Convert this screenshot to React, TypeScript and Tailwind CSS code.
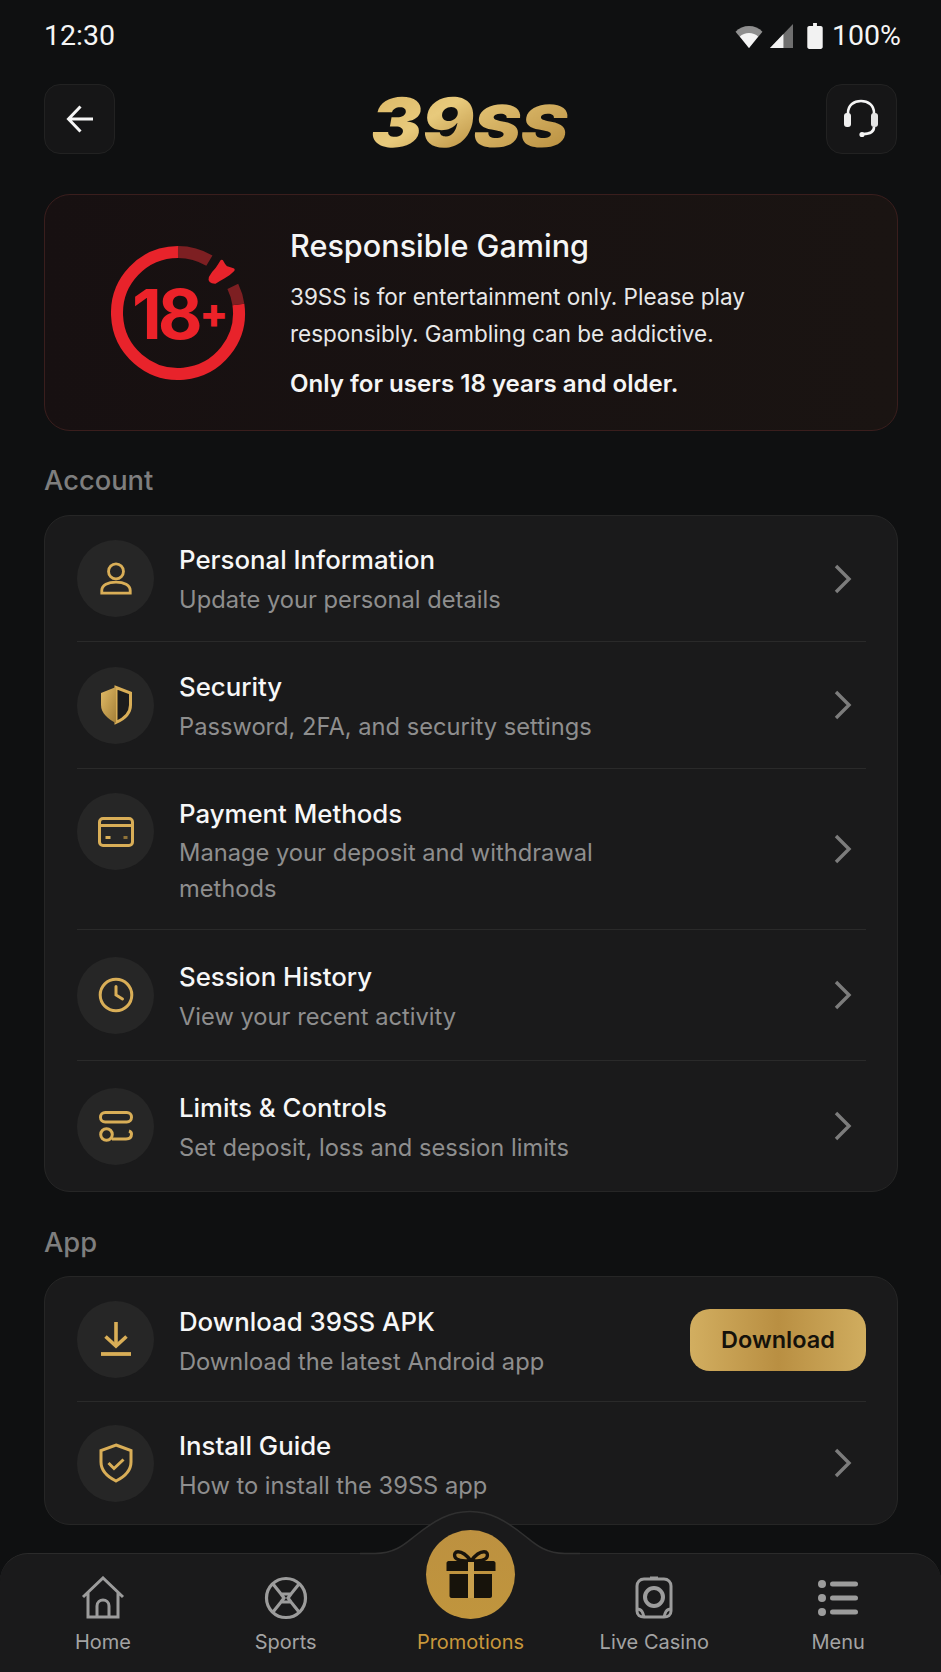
import React from "react";

const GOLD = "#d9ae57";

function Chevron() {
  return (
    <svg width="20" height="30" viewBox="0 0 20 30" fill="none" className="mr-[13px] shrink-0">
      <path d="M3 2 L16 15 L3 28" stroke="#7c7c7c" strokeWidth="3.4" />
    </svg>
  );
}

const UserIcon = () => (
  <svg width="32" height="33" viewBox="0 0 36 37" fill="none" stroke={GOLD} strokeWidth="3.2">
    <circle cx="18" cy="10.5" r="8.4" />
    <path d="M2 35 V32 C2 26 9 22.5 18 22.5 C27 22.5 34 26 34 32 V35 Z" />
  </svg>
);
const ShieldHalfIcon = () => (
  <svg width="36" height="40" viewBox="0 0 36 40">
    <defs>
      <linearGradient id="sh" x1="0" x2="1" y1="0" y2="1">
        <stop offset="0" stopColor="#e2bb66" />
        <stop offset="1" stopColor="#a37f38" />
      </linearGradient>
    </defs>
    <path d="M18 2.5 L32.5 8 V20 C32.5 28 26 34 18 37.5 Z" fill="#1c1c1c" stroke={GOLD} strokeWidth="3" />
    <path d="M18 2 L3 8 V20 C3 28 10 34 18 38 Z" fill="url(#sh)" />
  </svg>
);
const CardIcon = () => (
  <svg width="36" height="30" viewBox="0 0 36 30" fill="none" stroke={GOLD} strokeWidth="3">
    <rect x="1.5" y="1.5" width="33" height="27" rx="3.5" />
    <path d="M1.5 8.5 H34.5" />
    <path d="M7.5 20.5 H12.5" />
    <path d="M25.5 20.5 H29.5" stroke="#8f7238" />
  </svg>
);
const ClockIcon = () => (
  <svg width="36" height="36" viewBox="0 0 36 36" fill="none" stroke={GOLD} strokeWidth="3">
    <circle cx="18" cy="18" r="15.8" />
    <path d="M18 9.5 V18 L24.5 22" strokeLinecap="round" />
  </svg>
);
const LimitsIcon = () => (
  <svg width="34" height="31" viewBox="0 0 34 31" fill="none" stroke={GOLD} strokeWidth="3">
    <rect x="1.5" y="1.5" width="31" height="9.5" rx="4.7" />
    <circle cx="7.5" cy="23.5" r="5.8" />
    <path d="M13 28 H27 C30.5 28 32.5 26 32.5 23 C32.5 21.5 31.5 20.5 30 20" />
  </svg>
);
const DownloadIcon = () => (
  <svg width="36" height="36" viewBox="0 0 36 36" fill="none" stroke={GOLD}>
    <path d="M18 1 V24" strokeWidth="3.6" />
    <path d="M7.5 15.5 L18 25 L28.5 15.5" strokeWidth="3.6" />
    <path d="M3 33 H33" strokeWidth="3.8" />
  </svg>
);
const ShieldCheckIcon = () => (
  <svg width="36" height="40" viewBox="0 0 36 40" fill="none" stroke={GOLD} strokeWidth="3">
    <path d="M18 2 L33 7.5 V19 C33 28 26 34 18 38 C10 34 3 28 3 19 V7.5 Z" />
    <path d="M10.5 20 L16 25.5 L25.5 16.5" />
  </svg>
);

function Circle({ children }: { children: React.ReactNode }) {
  return (
    <div className="flex h-[77px] w-[77px] shrink-0 items-center justify-center rounded-full bg-[#262626]">{children}</div>
  );
}

function Row({
  icon,
  title,
  sub,
  h,
  right,
  top,
  textOffset = "mt-[3px]",
}: {
  icon: React.ReactNode;
  title: string;
  sub: React.ReactNode;
  h: string;
  right?: React.ReactNode;
  top?: boolean;
  textOffset?: string;
}) {
  return (
    <div className={`flex ${h} ${top ? "items-start pt-6" : "items-center"}`}>
      <Circle>{icon}</Circle>
      <div className={`ml-[25px] min-w-0 flex-1 ${textOffset}`}>
        <div className="text-[25.8px] font-medium leading-9 text-[#f7f7f7]">{title}</div>
        <div className={`${top ? "mt-[3px]" : "mt-1"} text-[23.7px] leading-9 text-[#8e8e8e]`}>{sub}</div>
      </div>
      <div className={top ? "-mt-6 self-center" : ""}>{right ?? <Chevron />}</div>
    </div>
  );
}

const Divider = () => <div className="h-px bg-[#2a2a2a]" />;

function SectionLabel({ children, className }: { children: React.ReactNode; className: string }) {
  return <div className={`text-[27.3px] font-medium leading-8 text-[#7e7e7e] ${className}`}>{children}</div>;
}

function NavItem({
  label,
  icon,
  active,
  className = "",
}: {
  label: string;
  icon: React.ReactNode;
  active?: boolean;
  className?: string;
}) {
  return (
    <div className={`flex flex-col items-center ${className}`}>
      <div className="flex h-[44px] items-center justify-center">{icon}</div>
      <div className={`mt-[8px] text-[20px] leading-7 ${active ? "text-[#c8973b]" : "text-[#a3a3a3]"}`}>{label}</div>
    </div>
  );
}

export default function App() {
  return (
    <div className="relative flex h-[1672px] w-[941px] flex-col overflow-hidden bg-[#0f1011] font-['Inter',sans-serif] text-white">
      {/* status bar */}
      <div className="flex h-[84px] items-start justify-between pl-[44px] pr-[40px] pt-[18px] font-['Roboto',sans-serif] text-[#f5f5f5]">
        <span className="text-[28.5px] leading-9">12:30</span>
        <div className="flex items-center">
          <svg width="30" height="25" viewBox="0 0 30 26">
            <path d="M15 25 L1 8 C8 0 22 0 29 8 Z" fill="#8f8f8f" />
            <path d="M15 25 L5.5 13 C10 8 20 8 24.5 13 Z" fill="#f5f5f5" />
          </svg>
          <svg width="23" height="25" viewBox="0 0 24 26" className="ml-[6px]">
            <path d="M24 0 V25 H0 Z" fill="#6f6f6f" />
            <path d="M14 10.5 V25 H0 Z" fill="#f2f2f2" />
          </svg>
          <svg width="16" height="26" viewBox="0 0 16 27" className="ml-[14px]">
            <path d="M6 0 H10 V3 H14 C15 3 16 4 16 5 V25 C16 26 15 27 14 27 H2 C1 27 0 26 0 25 V5 C0 4 1 3 2 3 H6 Z" fill="#f2f2f2" />
          </svg>
          <span className="ml-[9px] text-[28.5px] leading-9">100%</span>
        </div>
      </div>

      {/* header */}
      <div className="flex h-[70px] items-center justify-between px-[44px]">
        <div className="flex h-[70px] w-[71px] items-center justify-center rounded-[16px] border border-[#222] bg-[#161617]">
          <svg width="28" height="28" viewBox="0 0 28 28" fill="none" stroke="#f5f5f5" strokeWidth="3">
            <path d="M27 14 H2.5 M14.5 1.5 L2.5 14 L14.5 26.5" />
          </svg>
        </div>
        <div className="mt-[6px] flex -skew-x-[10deg] items-baseline font-['Inter',sans-serif] font-black leading-none">
          <span className="mr-[12px] origin-left scale-x-[1.13] bg-gradient-to-br from-[#dcb866] via-[#e8ca7c] to-[#b98f3f] bg-clip-text text-[68px] text-transparent">39</span>
          <span className="mr-[16px] origin-left scale-x-[1.22] bg-gradient-to-br from-[#e6c677] to-[#b88e3e] bg-clip-text text-[58px] text-transparent">SS</span>
        </div>
        <div className="flex h-[70px] w-[71px] items-center justify-center rounded-[16px] border border-[#222] bg-[#161617]">
          <svg width="38" height="40" viewBox="0 0 38 40" fill="none">
            <path d="M6 20 V14 C6 6 12 2 19 2 C26 2 32 6 32 14 V20" stroke="#f5f5f5" strokeWidth="2.6" />
            <rect x="2" y="14" width="7" height="14" rx="3" fill="#f0f0f0" />
            <rect x="29" y="14" width="7" height="14" rx="3" fill="#e4e4e4" />
            <path d="M32 28 C32 33 27 35 21 35" stroke="#f5f5f5" strokeWidth="2.6" />
            <circle cx="20" cy="35.5" r="2.6" fill="#f5f5f5" />
          </svg>
        </div>
      </div>

      {/* responsible gaming banner */}
      <div className="ml-[44px] mt-[40px] flex h-[237px] w-[854px] items-center rounded-[26px] border border-[#3a1e1d] bg-gradient-to-r from-[#171011] to-[#1a1412] pl-[66px]">
        <svg width="136" height="140" viewBox="0 0 136 140" className="shrink-0">
          <path d="M67 9 A61 61 0 1 0 127.4 61.5" fill="none" stroke="#e8232b" strokeWidth="12" />
          <path d="M67 9 A61 61 0 0 1 98.4 17.7" fill="none" stroke="#7d1f22" strokeWidth="12" />
          <path d="M121.8 43.3 A61 61 0 0 1 127.4 61.5" fill="none" stroke="#7d1f22" strokeWidth="12" />
          <path d="M110.7 18.5 Q113 23 115 24.5 L122 26.8 Q118 31 113.3 33.5 Q108 36.5 104 39 Q98 39 99.5 34.5 Q102 30 106 26 Q108 23 110.7 18.5 Z" fill="#e8232b" stroke="#e8232b" strokeWidth="3.4" strokeLinejoin="round" />
          <text x="21" y="96" fill="#ec2229" fontFamily="Inter, sans-serif" fontSize="69" fontWeight="700" letterSpacing="-4">18</text>
          <text x="103" y="85" textAnchor="middle" fill="#ec2229" fontFamily="Inter, sans-serif" fontSize="42" fontWeight="800">+</text>
        </svg>
        <div className="ml-[43px] pt-[1px]">
          <div className="text-[30.6px] font-medium leading-10 text-[#f5f5f5]">Responsible Gaming</div>
          <div className="mt-[12px] text-[22.5px] leading-[37px] text-[#e8e8e8]">
            39SS is for entertainment only. Please play
            <br />
            responsibly. Gambling can be addictive.
          </div>
          <div className="mt-[16px] text-[24.1px] font-semibold leading-8 text-[#f5f5f5]">Only for users 18 years and older.</div>
        </div>
      </div>

      <SectionLabel className="mx-[44px] mt-[34px]">Account</SectionLabel>

      <div className="ml-[44px] mt-[18px] w-[854px] rounded-[26px] border border-[#262626] bg-[#1a1a1b] pl-[32px] pr-[31px]">
        <Row h="h-[125px]" icon={<UserIcon />} title="Personal Information" sub="Update your personal details" />
        <Divider />
        <Row h="h-[126px]" icon={<ShieldHalfIcon />} title="Security" sub="Password, 2FA, and security settings" />
        <Divider />
        <Row
          h="h-[160px]"
          top
          icon={<CardIcon />}
          title="Payment Methods"
          sub={
            <>
              Manage your deposit and withdrawal
              <br />
              methods
            </>
          }
        />
        <Divider />
        <Row h="h-[130px]" icon={<ClockIcon />} title="Session History" sub="View your recent activity" />
        <Divider />
        <Row h="h-[130px]" icon={<LimitsIcon />} title="Limits & Controls" sub="Set deposit, loss and session limits" />
      </div>

      <SectionLabel className="mx-[44px] mt-[35px]">App</SectionLabel>

      <div className="ml-[44px] mt-[17px] w-[854px] rounded-[26px] border border-[#262626] bg-[#1a1a1b] pl-[32px] pr-[31px]">
        <Row
          h="h-[124px]"
          textOffset="mt-[5px]"
          icon={<DownloadIcon />}
          title="Download 39SS APK"
          sub="Download the latest Android app"
          right={
            <div className="mt-[1px] flex h-[62px] w-[176px] items-center justify-center rounded-[20px] bg-gradient-to-r from-[#d2ae60] via-[#b98f42] to-[#d0ad5f] text-[23.5px] font-semibold text-[#15120b]">
              Download
            </div>
          }
        />
        <Divider />
        <Row h="h-[122px]" textOffset="mt-[5px]" icon={<ShieldCheckIcon />} title="Install Guide" sub="How to install the 39SS app" />
      </div>

      {/* bottom nav */}
      <div className="relative mt-auto h-[119px] rounded-t-[28px] border-t border-[#2b2b2b] bg-[#1a1a1b]">
        <svg width="220" height="56" viewBox="0 0 220 56" className="absolute left-[360px] top-[-54px]">
          <path d="M0 53.5 H15 C35 53.5 45 44 55 36 C75 20 90 11.5 110 11.5 C130 11.5 145 20 165 36 C175 44 185 53.5 205 53.5 H220 V56 H0 Z" fill="#1a1a1b" />
          <path d="M0 53.5 H15 C35 53.5 45 44 55 36 C75 20 90 11.5 110 11.5 C130 11.5 145 20 165 36 C175 44 185 53.5 205 53.5 H220" fill="none" stroke="#303030" strokeWidth="1.5" />
        </svg>
        <div className="absolute left-[426px] top-[-24px] flex h-[89px] w-[89px] items-center justify-center rounded-full bg-gradient-to-b from-[#bd9140] to-[#c0953d]">
          <svg width="50" height="50" viewBox="0 0 50 50" fill="none">
            <path d="M25 11 C20 4 15 1.7 12 1.7 C9 1.7 8 4 9 7 C10 10 18 11 25 11 C32 11 40 10 41 7 C42 4 41 1.7 38 1.7 C35 1.7 30 4 25 11 Z" stroke="#17130b" strokeWidth="3.4" />
            <path d="M2.5 11 H47.5 C48.5 11 49.5 12 49.5 13 V21 H0.5 V13 C0.5 12 1.5 11 2.5 11 Z" fill="#17130b" />
            <path d="M3.5 24 H46 V46 C46 47 45 48 44 48 H5.5 C4.5 48 3.5 47 3.5 46 Z" fill="#17130b" />
            <path d="M22 12 H28 V48 H22 Z" fill="#c9a04c" />
          </svg>
        </div>
        <div className="grid grid-cols-5 px-[11px] pt-[22px]">
          <NavItem
            label="Home"
            icon={
              <svg width="44" height="44" viewBox="0 0 44 44" fill="none" stroke="#9c9c9c" strokeWidth="3">
                <path d="M2 21 L22 2 L42 21 M7 17 V41 H37 V17" />
                <path d="M16 41 V30 C16 22 28 22 28 30 V41" />
              </svg>
            }
          />
          <NavItem
            label="Sports"
            className="pr-[2px]"
            icon={
              <svg width="44" height="44" viewBox="0 0 44 44" fill="none" stroke="#9c9c9c" strokeWidth="3.2">
                <circle cx="22" cy="22" r="19.5" />
                <path d="M9 8 L17 18 H27 L35 8 M9 36 L17 26 H27 L35 36 M17 18 L20 22 L17 26 M27 18 L24 22 L27 26" />
              </svg>
            }
          />
          <NavItem active label="Promotions" icon={<div className="h-[44px] w-[44px]" />} />
          <NavItem
            label="Live Casino"
            icon={
              <svg width="40" height="44" viewBox="0 0 40 44" fill="none" stroke="#9c9c9c" strokeWidth="3">
                <path d="M10 3 H30 C34 3 37 6 37 10 V35 C37 39 34 41 30 41 H10 C6 41 3 39 3 35 V10 C3 6 6 3 10 3 Z" />
                <circle cx="20" cy="21" r="9" strokeWidth="4" />
                <path d="M3 33 C8 33 9 37 10 41 M37 33 C32 33 31 37 30 41" />
                <path d="M16 2 H24" />
              </svg>
            }
          />
          <NavItem
            label="Menu"
            icon={
              <svg width="40" height="36" viewBox="0 0 40 36" fill="#9c9c9c">
                <circle cx="4" cy="4" r="4" />
                <circle cx="4" cy="18" r="4" />
                <circle cx="4" cy="32" r="4" />
                <rect x="12" y="1.5" width="28" height="5" rx="2.5" />
                <rect x="12" y="15.5" width="28" height="5" rx="2.5" />
                <rect x="12" y="29.5" width="28" height="5" rx="2.5" />
              </svg>
            }
          />
        </div>
      </div>
    </div>
  );
}
